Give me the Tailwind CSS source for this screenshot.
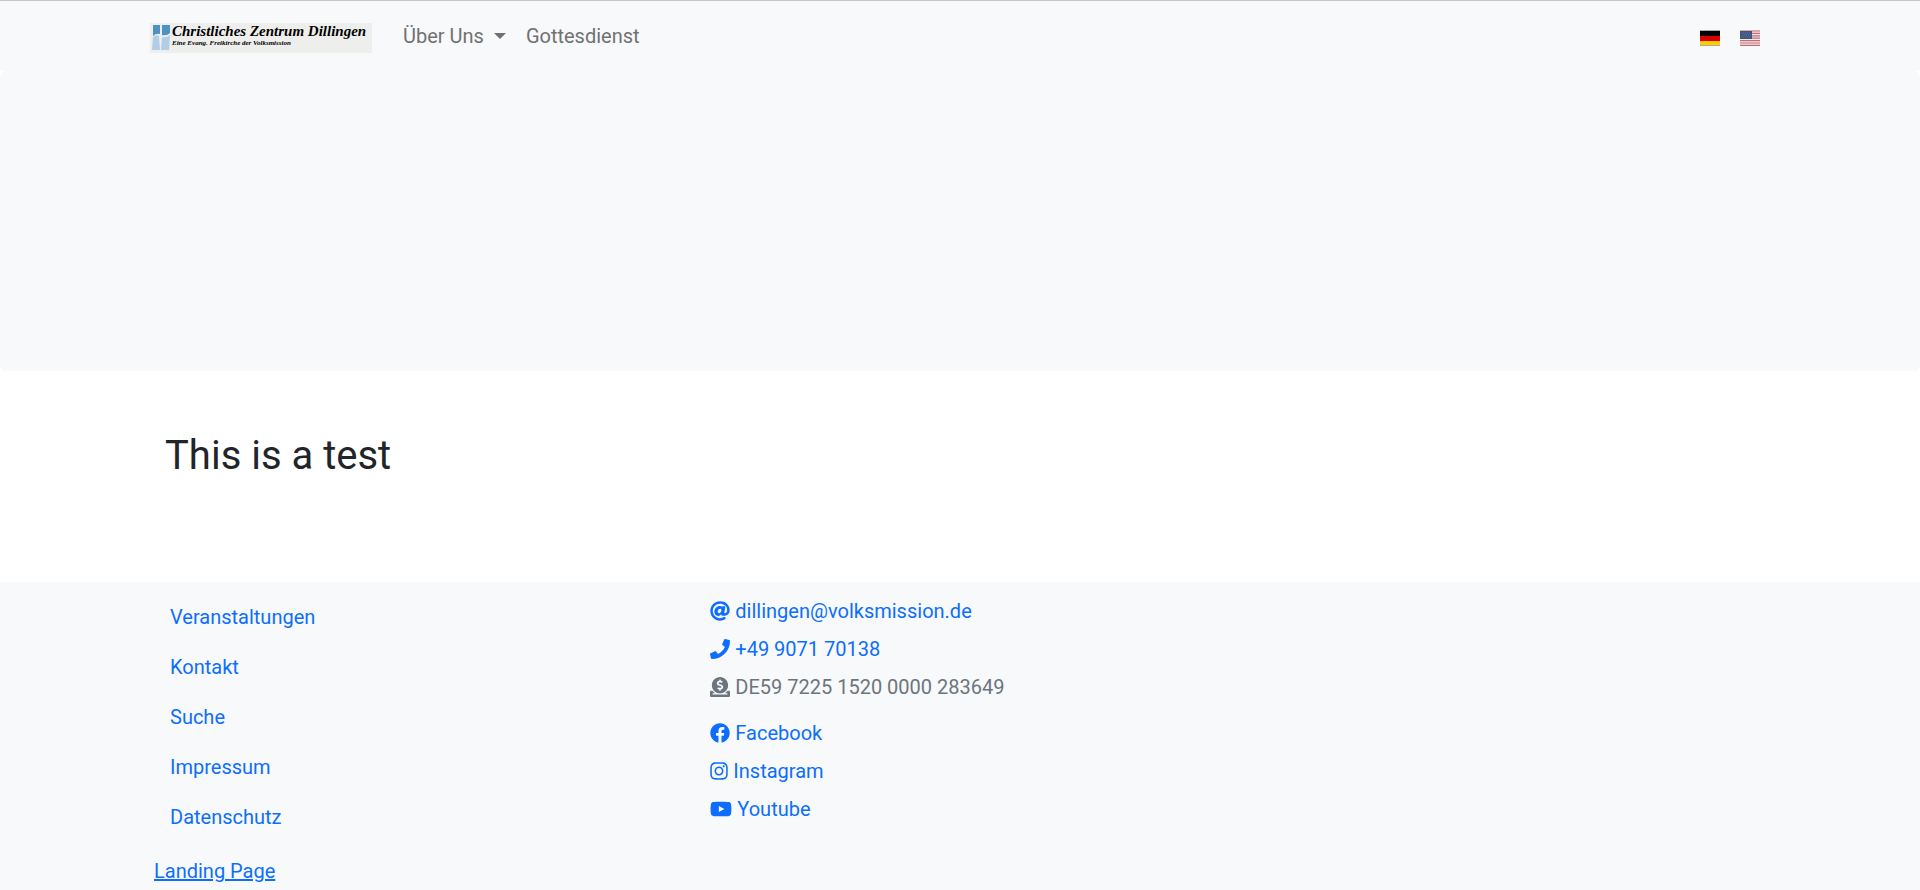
<!DOCTYPE html>
<html lang="de">
<head>
<meta charset="utf-8">
<meta name="viewport" content="width=device-width, initial-scale=1">
<title>Christliches Zentrum Dillingen</title>
<script src="https://cdn.jsdelivr.net/npm/@tailwindcss/browser@4"></script>
</head>
<body class="flex min-h-screen flex-col bg-white font-['Roboto',sans-serif] text-[20px] leading-[30px] text-[#212529]">
<header class="border-t border-[#c6c7c8] bg-[#f8f9fa]">
  <nav class="mx-auto flex h-[70px] max-w-[1640px] items-center px-[10px]">
    <a href="#" class="mt-[4px] flex h-[30px] w-[222px] shrink-0 gap-[2px] bg-[#eeeeec] pl-[2px] text-black">
      <svg class="mt-[2px] h-[26px] w-[18px] shrink-0" viewBox="0 0 18 26" aria-hidden="true">
        <path fill="#4c93c2" d="M1 0H8V9Q4 8 1 11ZM10 0L18 -1V8Q15 11 10 10Z"/>
        <path fill="#b2cee6" d="M1 12Q4 9 7 11L8 25L0 25ZM10 12Q15 13 18 10L17 25H9Z"/>
      </svg>
      <span class="flex flex-col whitespace-nowrap font-['Liberation_Serif',serif] font-bold italic">
        <span class="text-[15px] leading-[16px]">Christliches Zentrum Dillingen</span>
        <span class="text-[7px] leading-[8px]">Eine Evang. Freikirche der Volksmission</span>
      </span>
    </a>
    <div class="ml-[21px] flex text-[#707172]">
      <button type="button" aria-haspopup="true" class="flex items-center gap-[10px] px-[10px]">Über Uns
        <svg class="h-[6px] w-[12px]" viewBox="0 0 12 6" fill="currentColor" aria-hidden="true"><path d="M0 0H12L6 6Z"/></svg>
      </button>
      <a href="#" class="px-[10px]">Gottesdienst</a>
    </div>
    <div class="ml-auto mt-[3px] flex gap-[20px] pr-[10px]">
      <a href="#" aria-label="Deutsch"><svg class="h-[16px] w-[20px]" viewBox="0 0 20 16"><path fill="#aaa9a6" d="M0 0H20V16H0Z"/><path d="M0 1H20V6H0Z"/><path fill="#d80000" d="M0 6H20V11H0Z"/><path fill="#ffce00" d="M0 11H20V15H0Z"/></svg></a>
      <a href="#" aria-label="English"><svg class="h-[16px] w-[20px]" viewBox="0 0 20 16"><path fill="#f4e9e9" d="M0 0H20V16H0Z"/><path stroke="#c26d75" stroke-width="1.2" d="M0 1H20M0 3.4H20M0 5.8H20M0 8.2H20M0 10.6H20M0 13H20M0 15.4H20"/><path fill="#3f5480" d="M0 1H12V9H0Z"/><path stroke="#7d8cab" stroke-dasharray="1 1" stroke-width=".6" d="M1 3H11M2 5H11M1 7H11"/></svg></a>
    </div>
  </nav>
</header>
<section class="h-[300px] rounded-[6px] bg-[#f8f9fa]"></section>
<main class="mx-auto w-full max-w-[1640px] px-[25px] pt-[61px] pb-[102px]">
  <h1 class="text-[40px] leading-[48px]">This is a test</h1>
</main>
<footer class="grow bg-[#f8f9fa] text-[#0d6efd]">
  <div class="mx-auto grid max-w-[1640px] grid-cols-3 px-[14px]">
    <div class="pt-[10px]">
      <ul class="flex flex-col items-start px-[16px]">
        <li class="py-[10px]"><a href="#">Veranstaltungen</a></li>
        <li class="py-[10px]"><a href="#">Kontakt</a></li>
        <li class="py-[10px]"><a href="#">Suche</a></li>
        <li class="py-[10px]"><a href="#">Impressum</a></li>
        <li class="py-[10px]"><a href="#">Datenschutz</a></li>
      </ul>
      <a href="#" class="mt-[14px] inline-block underline">Landing Page</a>
    </div>
    <div class="flex flex-col items-start gap-[8px] pt-[14px] pl-[19px]">
      <a href="#" class="flex items-center gap-[5px]"><svg class="h-[20px] w-[20px]" viewBox="0 0 512 512" fill="currentColor" aria-hidden="true"><path d="M256 8C118.941 8 8 118.919 8 256c0 137.059 110.919 248 248 248 48.154 0 95.342-14.14 135.408-40.223 12.005-7.815 14.625-24.288 5.552-35.372l-10.177-12.433c-7.671-9.371-21.179-11.667-31.373-5.129C325.92 429.757 291.314 440 256 440c-101.458 0-184-82.542-184-184S154.542 72 256 72c100.139 0 184 57.619 184 160 0 38.786-21.093 79.742-58.17 83.693-17.349-.454-16.91-12.857-13.476-30.024l23.433-121.11C394.653 149.75 383.308 136 368.225 136h-44.981a13.518 13.518 0 0 0-13.432 11.993l-.01.092c-14.697-17.901-40.448-21.775-59.971-21.775-74.58 0-137.831 62.234-137.831 151.46 0 65.303 36.785 105.87 96 105.87 26.984 0 57.369-15.637 74.991-38.333 9.522 34.104 40.613 34.104 70.71 34.104C462.609 379.41 504 307.798 504 232 504 95.653 394.023 8 256 8zm-21.68 304.43c-22.249 0-36.07-15.623-36.07-40.771 0-44.993 30.779-72.729 58.63-72.729 22.292 0 35.601 15.241 35.601 40.77 0 45.061-33.875 72.73-58.161 72.73z"/></svg>dillingen@volksmission.de</a>
      <a href="#" class="flex items-center gap-[5px]"><svg class="h-[20px] w-[20px]" viewBox="0 0 512 512" fill="currentColor" aria-hidden="true"><path d="M493.4 24.6l-104-24c-11.3-2.6-22.9 3.3-27.5 13.9l-48 112c-4.2 9.8-1.4 21.3 6.9 28l60.6 49.6c-36 76.7-98.9 140.5-177.2 177.2l-49.6-60.6c-6.8-8.3-18.2-11.1-28-6.9l-112 48C3.9 366.5-2 378.1.6 389.4l24 104C27.1 504.2 36.7 512 48 512c256.1 0 464-207.5 464-464 0-11.2-7.7-20.9-18.6-23.4z"/></svg>+49 9071 70138</a>
      <p class="flex items-center gap-[5px] text-[#6c757d]"><svg class="h-[20px] w-[20px]" viewBox="0 0 512 512" fill="currentColor" aria-hidden="true"><path d="M256 416c114.9 0 208-93.1 208-208S370.9 0 256 0 48 93.1 48 208s93.1 208 208 208zM233.8 97.4V80.6c0-9.2 7.4-16.6 16.6-16.6h11.1c9.2 0 16.6 7.4 16.6 16.6v17c15.5.8 30.5 6.1 43 15.4 5.6 4.1 6.2 12.3 1.2 17.1L306 145.6c-3.8 3.7-9.5 3.8-14 1-5.4-3.4-11.4-5.1-17.8-5.1h-38.9c-9 0-16.3 8.2-16.3 18.3 0 8.2 5 15.5 12.1 17.6l62.3 18.7c25.7 7.7 43.7 32.4 43.7 60.1 0 34-26.4 61.5-59.1 62.4v16.8c0 9.2-7.4 16.6-16.6 16.6h-11.1c-9.2 0-16.6-7.4-16.6-16.6v-17c-15.5-.8-30.5-6.1-43-15.4-5.6-4.1-6.2-12.3-1.2-17.1l16.3-15.5c3.8-3.7 9.5-3.8 14-1 5.4 3.4 11.4 5.1 17.8 5.1h38.9c9 0 16.3-8.2 16.3-18.3 0-8.2-5-15.5-12.1-17.6l-62.3-18.7c-25.7-7.7-43.7-32.4-43.7-60.1.1-34 26.4-61.5 59.1-62.4zM480 352h-32.5c-19.6 26-44.6 47.7-73 64h63.8c5.3 0 9.6 3.6 9.6 8v16c0 4.4-4.3 8-9.6 8H73.6c-5.3 0-9.6-3.6-9.6-8v-16c0-4.4 4.3-8 9.6-8h63.8c-28.4-16.3-53.3-38-73-64H32c-17.7 0-32 14.3-32 32v96c0 17.7 14.3 32 32 32h448c17.7 0 32-14.3 32-32v-96c0-17.7-14.3-32-32-32z"/></svg>DE59 7225 1520 0000 283649</p>
      <a href="#" class="mt-[8px] flex items-center gap-[5px]"><svg class="h-[20px] w-[20px]" viewBox="0 0 512 512" fill="currentColor" aria-hidden="true"><path d="M504 256C504 119 393 8 256 8S8 119 8 256c0 123.78 90.69 226.38 209.25 245V327.69h-63V256h63v-54.64c0-62.15 37-96.48 93.67-96.48 27.14 0 55.52 4.84 55.52 4.84v61h-31.28c-30.8 0-40.41 19.12-40.41 38.73V256h68.78l-11 71.69h-57.78V501C413.31 482.38 504 379.78 504 256z"/></svg>Facebook</a>
      <a href="#" class="flex items-center gap-[5px]"><svg class="h-[20px] w-[18px]" viewBox="0 0 448 512" fill="currentColor" aria-hidden="true"><path d="M224.1 141c-63.6 0-114.9 51.3-114.9 114.9s51.3 114.9 114.9 114.9S339 319.5 339 255.9 287.7 141 224.1 141zm0 189.6c-41.1 0-74.7-33.5-74.7-74.7s33.5-74.7 74.7-74.7 74.7 33.5 74.7 74.7-33.6 74.7-74.7 74.7zm146.4-194.3c0 14.9-12 26.8-26.8 26.8-14.9 0-26.8-12-26.8-26.8s12-26.8 26.8-26.8 26.8 12 26.8 26.8zm76.1 27.2c-1.7-35.9-9.9-67.7-36.2-93.9-26.2-26.2-58-34.4-93.9-36.2-37-2.1-147.9-2.1-184.9 0-35.8 1.7-67.6 9.9-93.9 36.1s-34.4 58-36.2 93.9c-2.1 37-2.1 147.9 0 184.9 1.7 35.9 9.9 67.7 36.2 93.9s58 34.4 93.9 36.2c37 2.1 147.9 2.1 184.9 0 35.9-1.7 67.7-9.9 93.9-36.2 26.2-26.2 34.4-58 36.2-93.9 2.1-37 2.1-147.8 0-184.8zM398.8 388c-7.8 19.6-22.9 34.7-42.6 42.6-29.5 11.7-99.5 9-132.1 9s-102.7 2.6-132.1-9c-19.6-7.8-34.7-22.9-42.6-42.6-11.7-29.5-9-99.5-9-132.1s-2.6-102.7 9-132.1c7.8-19.6 22.9-34.7 42.6-42.6 29.5-11.7 99.5-9 132.1-9s102.7-2.6 132.1 9c19.6 7.8 34.7 22.9 42.6 42.6 11.7 29.5 9 99.5 9 132.1s2.7 102.7-9 132.1z"/></svg>Instagram</a>
      <a href="#" class="flex items-center gap-[5px]"><svg class="h-[20px] w-[22px]" viewBox="0 0 576 512" fill="currentColor" aria-hidden="true"><path d="M549.655 124.083c-6.281-23.65-24.787-42.276-48.284-48.597C458.781 64 288 64 288 64S117.22 64 74.629 75.486c-23.497 6.322-42.003 24.947-48.284 48.597-11.412 42.867-11.412 132.305-11.412 132.305s0 89.438 11.412 132.305c6.281 23.65 24.787 41.5 48.284 47.821C117.22 448 288 448 288 448s170.78 0 213.371-11.486c23.497-6.321 42.003-24.171 48.284-47.821 11.412-42.867 11.412-132.305 11.412-132.305s0-89.438-11.412-132.305zm-317.51 213.508V175.185l142.739 81.205-142.739 81.201z"/></svg>Youtube</a>
    </div>
  </div>
</footer>
</body>
</html>
